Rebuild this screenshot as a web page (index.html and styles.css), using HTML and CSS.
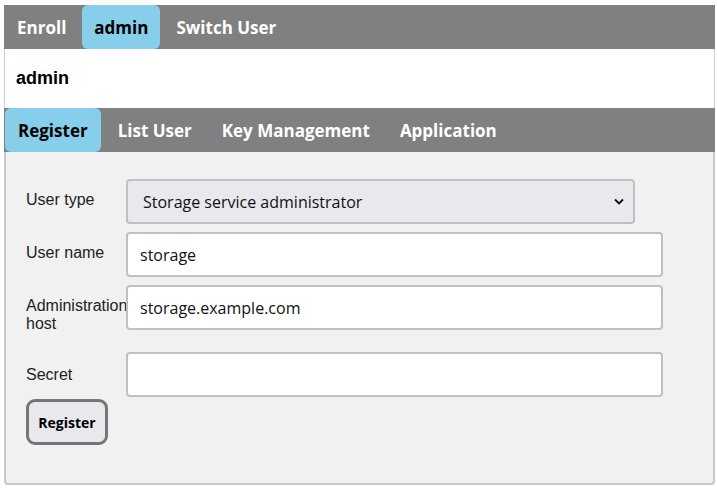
FILE: index.html
```html
<!DOCTYPE html>
<html>
<head>
<meta charset="utf-8">
<link rel="stylesheet" href="styles.css">
</head>
<body>
<div class="page">
  <nav class="tabbar">
    <a class="tab">Enroll</a>
    <a class="tab active">admin</a>
    <a class="tab">Switch User</a>
  </nav>
  <div class="title">admin</div>
  <nav class="tabbar sub">
    <a class="tab active">Register</a>
    <a class="tab">List User</a>
    <a class="tab">Key Management</a>
    <a class="tab">Application</a>
  </nav>
  <div class="panel">
    <form class="form">
      <label class="lbl">User type</label>
      <div class="field select-wrap">
        <div class="select">
          <span>Storage service administrator</span>
          <svg class="chev" width="10" height="7" viewBox="0 0 10 7"><path d="M1 1.5 L5 5.5 L9 1.5" fill="none" stroke="#111" stroke-width="1.8"/></svg>
        </div>
      </div>
      <label class="lbl">User name</label>
      <div class="field"><div class="input">storage</div></div>
      <label class="lbl">Administration host</label>
      <div class="field"><div class="input">storage.example.com</div></div>
      <label class="lbl secret">Secret</label>
      <div class="field"><div class="input"></div></div>
    </form>
    <button class="btn" type="button">Register</button>
  </div>
</div>
</body>
</html>
```
FILE: styles.css
```css
html, body {
  margin: 0;
  padding: 0;
  background: #ffffff;
}
.page {
  margin: 5px 0 0 4px;
  width: 711px;
}
.tabbar {
  display: flex;
  gap: 4px;
  height: 44px;
  background: #808080;
  padding-left: 1px;
}
.tab {
  display: flex;
  align-items: center;
  padding: 0 12px;
  font-family: "Open Sans", sans-serif;
  font-weight: 700;
  font-size: 17px;
  color: #ffffff;
  border-radius: 6px;
}
.sub .tab {
  padding: 0 13px;
}
.tab.active {
  background: #87ceeb;
  color: #000000;
}
.title {
  height: 59px;
  display: flex;
  align-items: center;
  padding-left: 11px;
  border-left: 1px solid #cccccc;
  border-right: 1px solid #cccccc;
  font-family: "Liberation Sans", Arial, sans-serif;
  font-weight: 700;
  font-size: 18px;
  color: #000000;
}
.panel {
  background: #f1f1f1;
  border: 2px solid #c8c8c8;
  border-top: none;
  border-radius: 0 0 4px 4px;
  height: 333px;
  padding: 27px 20px 0 20px;
  box-sizing: border-box;
}
.form {
  display: grid;
  grid-template-columns: 100px 537px;
  row-gap: 8px;
  margin: 0;
}
.lbl {
  font-family: "Liberation Sans", Arial, sans-serif;
  font-size: 16px;
  line-height: 18px;
  color: #222222;
  padding: 12px 0 11px 0;
  white-space: normal;
}
.lbl.secret {
  padding-top: 14px;
}
.field {
  display: flex;
  align-items: flex-start;
}
.select, .input {
  box-sizing: border-box;
  height: 45px;
  border: 2px solid #c0c0c0;
  border-radius: 4px;
  font-family: "Open Sans", sans-serif;
  font-size: 16px;
  color: #111111;
  display: flex;
  align-items: center;
}
.select {
  width: 509px;
  background: #e9e9ed;
  padding: 0 9px 0 15px;
  justify-content: space-between;
}
.input {
  width: 537px;
  background: #ffffff;
  padding: 0 12px;
}
.btn {
  margin-top: 2px;
  width: 82px;
  height: 46px;
  border: 3px solid #767676;
  border-radius: 9px;
  background: #e9e9ed;
  font-family: "Open Sans", sans-serif;
  font-weight: 700;
  font-size: 14px;
  color: #000000;
  padding: 0;
}
```
